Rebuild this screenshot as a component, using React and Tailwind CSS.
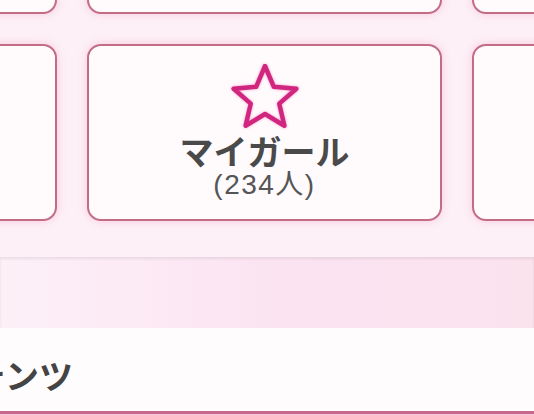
import React from "react";

function StarIcon() {
  return (
    <svg width="72" height="66" viewBox="-36 -35 72 66" className="drop-shadow-[0_0_1.5px_rgba(236,72,153,0.5)]">
      <polygon
        points="0,-33 8.82,-12.14 31.38,-10.2 14.27,4.64 19.4,26.7 0,15 -19.4,26.7 -14.27,4.64 -31.38,-10.2 -8.82,-12.14"
        fill="none"
        stroke="#d1267f"
        strokeWidth="4.5"
        strokeLinejoin="round"
      />
    </svg>
  );
}

function Card({ children }) {
  return (
    <div className="h-[177px] rounded-[14px] border-2 border-[#c26c86] bg-[#fffbfd] shadow-[0_0_9px_rgba(240,130,180,0.35)] flex flex-col items-center">
      {children}
    </div>
  );
}

export default function App() {
  return (
    <div className="w-[534px] h-[415px] overflow-hidden flex flex-col bg-[#fdf2f7] font-['Noto_Sans_CJK_JP','Noto_Sans',sans-serif]">
      {/* card grid */}
      <div className="h-[257px] shrink-0 overflow-hidden bg-[#fdf0f6]">
        <div className="grid grid-cols-[355px_355px_355px] gap-[30px] ml-[-298px] mt-[-163px]">
          <Card />
          <Card />
          <Card />
          <Card />
          <Card>
            <div className="pt-[18px]">
              <StarIcon />
            </div>
            <div className="mt-[5px] text-[34px] leading-[32px] font-bold text-[#4a4a4a]">マイガール</div>
            <div className="mt-[4px] text-[28px] leading-[28px] text-[#555555] tracking-[1.5px] font-['Liberation_Sans','Noto_Sans_CJK_JP',sans-serif]">(234人)</div>
          </Card>
          <Card />
        </div>
      </div>

      {/* pink band */}
      <div className="h-[71px] shrink-0 bg-gradient-to-r from-[#fdf0f7] via-[#fbe4f2] to-[#fbe3ee] shadow-[inset_0_2px_3px_rgba(0,0,0,0.08)]" />

      {/* section title */}
      <div className="h-[83px] shrink-0 bg-[#fffcfe] flex items-center pt-[11px]">
        <div className="ml-[-29px] text-[34px] font-bold text-[#444444] leading-none">テンツ</div>
      </div>
      <div className="h-[3px] shrink-0 bg-[#c8698a]" />
      <div className="flex-1 bg-[#f7c6da]" />
    </div>
  );
}
